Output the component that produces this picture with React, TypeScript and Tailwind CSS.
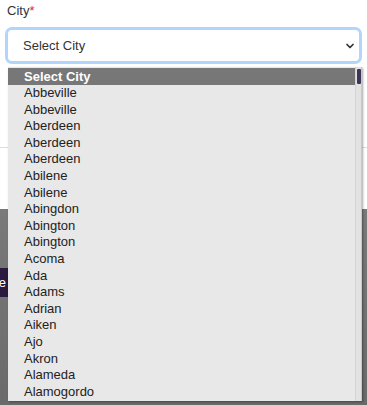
import { ChevronDown } from 'lucide-react';

const cities = [
  'Abbeville',
  'Abbeville',
  'Aberdeen',
  'Aberdeen',
  'Aberdeen',
  'Abilene',
  'Abilene',
  'Abingdon',
  'Abington',
  'Abington',
  'Acoma',
  'Ada',
  'Adams',
  'Adrian',
  'Aiken',
  'Ajo',
  'Akron',
  'Alameda',
  'Alamogordo',
];

function App() {
  return (
    <div className="relative w-[367px] h-[405px] overflow-hidden bg-white text-[13px] text-[#222]" style={{ fontFamily: '"Liberation Sans", Arial, sans-serif' }}>
      {/* ── Form field ─────────────────────────────────────────── */}
      <div className="px-[5px] pt-[3px]">
        <label className="block pl-[2px] h-[20px] leading-[16px] text-[13px] text-[#333]">
          City<span className="text-[#e0263a]">*</span>
        </label>
        <div className="mt-[4px] h-[37px] w-[357px] rounded-[7px] border-[3px] border-[#b4d5fb] bg-white flex items-center justify-between pl-[15px] pr-[3px]">
          <span className="text-[13px] text-[#333]">Select City</span>
          <ChevronDown className="w-[12px] h-[12px] text-[#333]" strokeWidth={3.5} />
        </div>
      </div>

      {/* ── Page content behind ────────────────────────────────── */}
      <div className="mt-[83px] h-px bg-[#dcdce6]" />
      <div className="mt-[61px] h-[200px] bg-gradient-to-b from-[#7a7a7a] to-[#6a6a6a] pt-[59px]">
        <div className="h-[29px] w-[120px] -ml-[112px] bg-[#2a1a40] text-white text-[13px] flex items-center justify-end pr-[2px]">
          See
        </div>
      </div>

      {/* ── Open dropdown list ─────────────────────────────────── */}
      <div className="absolute left-[8px] top-[67px] w-[354px] h-[334px] bg-[#e8e8e8] shadow-[1px_1px_2px_rgba(0,0,0,0.35)] flex">
        <ul className="flex-1 pt-[1px]">
          <li className="h-[17px] leading-[17px] pl-[16px] bg-[#777777] text-white font-bold">Select City</li>
          {cities.map((c, i) => (
            <li key={i} className="h-[16.6px] leading-[16.6px] pl-[16px] text-[#222]">
              {c}
            </li>
          ))}
        </ul>
        <div className="w-[7px] bg-[#e2e2e2] border-l border-[#d4d4d4] border-r border-r-[#c8c8c8] pt-[2px] flex justify-center">
          <div className="w-[4px] h-[15px] rounded-[1px] bg-[#3e3458]" />
        </div>
      </div>
    </div>
  );
}

export default App;
